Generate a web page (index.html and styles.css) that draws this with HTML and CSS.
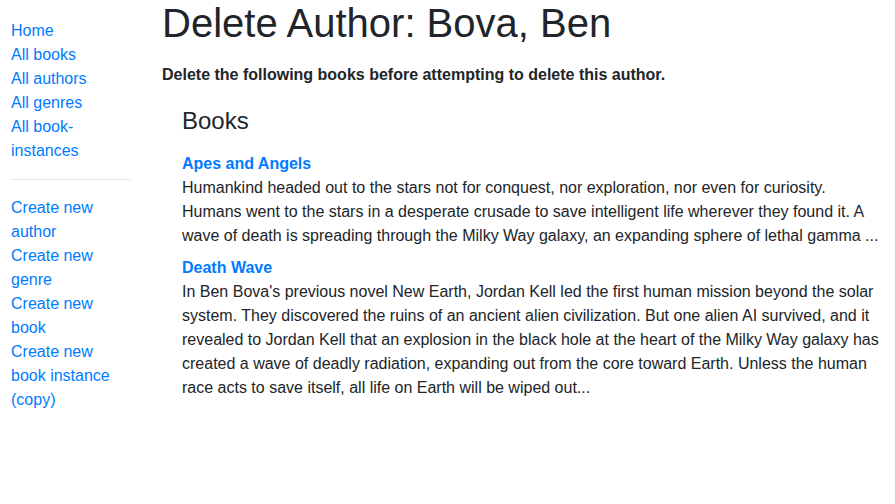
FILE: index.html
```
<!DOCTYPE html>
<html lang="en">
<head>
<meta charset="utf-8">
<title>Delete Author</title>
<link rel="stylesheet" href="styles.css">
</head>
<body>
<div class="page">
  <aside class="sidebar">
    <ul class="sidebar-nav">
      <li><a href="#">Home</a></li>
      <li><a href="#">All books</a></li>
      <li><a href="#">All authors</a></li>
      <li><a href="#">All genres</a></li>
      <li><a href="#">All book-instances</a></li>
      <li><hr class="divider"></li>
      <li><a href="#">Create new author</a></li>
      <li><a href="#">Create new genre</a></li>
      <li><a href="#">Create new book</a></li>
      <li><a href="#">Create new book instance (copy)</a></li>
    </ul>
  </aside>
  <main class="content">
    <h1 class="title">Delete Author: Bova, Ben</h1>
    <p class="lifespan"></p>
    <p class="warning"><strong>Delete the following books before attempting to delete this author.</strong></p>
    <div class="books">
      <h4 class="books-title">Books</h4>
      <dl class="book-list">
        <dt><a href="#">Apes and Angels</a></dt>
        <dd>Humankind headed out to the stars not for conquest, nor exploration, nor even for curiosity. Humans went to the stars in a desperate crusade to save intelligent life wherever they found it. A wave of death is spreading through the Milky Way galaxy, an expanding sphere of lethal gamma ...</dd>
        <dt><a href="#">Death Wave</a></dt>
        <dd>In Ben Bova's previous novel New Earth, Jordan Kell led the first human mission beyond the solar system. They discovered the ruins of an ancient alien civilization. But one alien AI survived, and it revealed to Jordan Kell that an explosion in the black hole at the heart of the Milky Way galaxy has created a wave of deadly radiation, expanding out from the core toward Earth. Unless the human race acts to save itself, all life on Earth will be wiped out...</dd>
      </dl>
    </div>
  </main>
</div>
</body>
</html>
```

FILE: styles.css
```
html, body {
  margin: 0;
  padding: 0;
  background: #fff;
}

body {
  font-family: "Liberation Sans", Arial, sans-serif;
  font-size: 16px;
  line-height: 24px;
  color: #212529;
}

a {
  color: #007bff;
  text-decoration: none;
}

.page {
  display: flex;
  align-items: flex-start;
  margin-top: -1px;
  padding: 0 15px 0 11px;
}

.sidebar {
  flex: 0 0 120px;
  width: 120px;
  margin-right: 31px;
}

.sidebar-nav {
  list-style: none;
  margin: 20px 0 0 0;
  padding: 0;
}

.divider {
  margin: 16px 0;
  border: 0;
  border-top: 1px solid rgba(0, 0, 0, 0.1);
  height: 0;
}

.content {
  flex: 1 1 auto;
  min-width: 0;
}

.title {
  font-size: 40px;
  line-height: 48px;
  font-weight: 500;
  margin: 0 0 8px 0;
}

.lifespan {
  margin: 0 0 16px 0;
}

.warning {
  margin: 0 0 16px 0;
}

.warning strong {
  font-weight: 700;
}

.books {
  margin-left: 20px;
  margin-top: 20px;
}

.books-title {
  font-size: 24px;
  line-height: 28.8px;
  font-weight: 500;
  margin: 0 0 16px 0;
}

.book-list {
  margin: 0 0 16px 0;
}

.book-list dt {
  font-weight: 700;
}

.book-list dd {
  margin: 0 0 8px 0;
}
```
